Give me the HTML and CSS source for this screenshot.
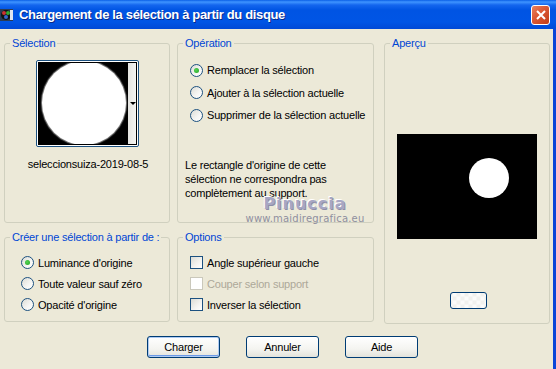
FILE: index.html
```html
<!DOCTYPE html>
<html>
<head>
<meta charset="utf-8">
<title>Chargement de la sélection à partir du disque</title>
<link rel="stylesheet" href="styles.css">
</head>
<body>
<div class="window">

<div class="titlebar">
  <svg class="appicon" width="14" height="14" viewBox="0 0 14 14">
    <rect x="0" y="1" width="13" height="12" fill="#2a3b55"/>
    <circle cx="6" cy="7" r="5" fill="#111"/>
    <circle cx="4" cy="5" r="2" fill="#c33"/>
    <circle cx="8" cy="5" r="2" fill="#3a3"/>
    <circle cx="6" cy="9" r="2" fill="#36c"/>
    <rect x="10" y="2" width="3" height="10" fill="#dfe6f0"/>
  </svg>
  <span class="title">Chargement de la sélection à partir du disque</span>
  <span class="close">
    <svg width="10" height="10" viewBox="0 0 10 10"><path d="M1 1 L9 9 M9 1 L1 9" stroke="#fff" stroke-width="2"/></svg>
  </span>
</div>

<div class="client">
  <div class="groups">

    <fieldset class="group g-selection">
      <legend>Sélection</legend>
      <div class="thumb">
        <div class="thumb-img">
          <div class="thumb-circle"></div>
          <div class="thumb-strip"><span class="arrow"></span></div>
        </div>
      </div>
      <div class="caption">seleccionsuiza-2019-08-5</div>
    </fieldset>

    <fieldset class="group g-operation">
      <legend>Opération</legend>
      <div class="choices">
        <label class="row"><span class="radio checked"></span>Remplacer la sélection</label>
        <label class="row"><span class="radio"></span>Ajouter à la sélection actuelle</label>
        <label class="row"><span class="radio"></span>Supprimer de la sélection actuelle</label>
      </div>
      <p class="warn">Le rectangle d'origine de cette sélection ne correspondra pas complètement au support.</p>
    </fieldset>

    <fieldset class="group g-apercu">
      <legend>Aperçu</legend>
      <div class="preview"><div class="preview-dot"></div></div>
      <span class="minibtn"></span>
    </fieldset>

    <fieldset class="group g-creer">
      <legend>Créer une sélection à partir de :</legend>
      <div class="choices">
        <label class="row"><span class="radio checked"></span>Luminance d'origine</label>
        <label class="row"><span class="radio"></span>Toute valeur sauf zéro</label>
        <label class="row"><span class="radio"></span>Opacité d'origine</label>
      </div>
    </fieldset>

    <fieldset class="group g-options">
      <legend>Options</legend>
      <div class="choices">
        <label class="row"><span class="check"></span>Angle supérieur gauche</label>
        <label class="row disabled"><span class="check"></span>Couper selon support</label>
        <label class="row"><span class="check"></span>Inverser la sélection</label>
      </div>
    </fieldset>

  </div>

  <div class="buttons">
    <button class="btn default">Charger</button>
    <button class="btn">Annuler</button>
    <button class="btn">Aide</button>
  </div>

  <div class="watermark">
    <div class="wm-name">Pinuccia</div>
    <div class="wm-url">www.maidiregrafica.eu</div>
  </div>
</div>

</div>
</body>
</html>
```

FILE: styles.css
```css
html, body {
  margin: 0;
  padding: 0;
}

body {
  width: 556px;
  height: 369px;
  overflow: hidden;
  background: #ece9d8;
  font-family: "Liberation Sans", Arial, sans-serif;
  font-size: 11px;
  letter-spacing: -0.2px;
  color: #000;
}

.window {
  width: 556px;
  height: 369px;
  position: relative;
}

/* title bar */
.titlebar {
  height: 29px;
  display: flex;
  align-items: center;
  background: linear-gradient(#0a5fe6 0, #3f94ff 2px, #1466ee 5px, #0054e3 10px, #0055e5 22px, #0049d6 29px);
  color: #fff;
}

.appicon {
  margin-right: 5px;
  flex: none;
}

.title {
  font-weight: bold;
  font-size: 13px;
  letter-spacing: -0.35px;
  text-shadow: 1px 1px 0 #0a2a8a;
  flex: 1;
}

.close {
  width: 17px;
  height: 18px;
  margin-right: 6px;
  margin-top: 1px;
  border: 1px solid #fff;
  border-radius: 3px;
  background: linear-gradient(135deg, #e8825f 0, #dc5b38 40%, #c23b16 100%);
  display: flex;
  align-items: center;
  justify-content: center;
  flex: none;
}

/* client area */
.client {
  height: 340px;
  border-right: 3px solid #0a45d8;
  position: relative;
}

.groups {
  display: grid;
  grid-template-columns: 166px 196px 168px;
  grid-template-rows: 187px 92px;
  column-gap: 8px;
  row-gap: 7px;
  padding: 7px 0 0 4px;
}

.group {
  margin: 0;
  padding: 0;
  min-width: 0;
  box-sizing: border-box;
  border: 1px solid #d0d0bf;
  border-radius: 3px;
}

.group legend {
  color: #0046d5;
  line-height: 14px;
  padding: 0 2px;
  margin-left: 5px;
  white-space: nowrap;
}

.g-selection { grid-column: 1; grid-row: 1; display: flex; flex-direction: column; align-items: center; padding-top: 10px; }
.g-operation { grid-column: 2; grid-row: 1; padding-top: 9px; margin-left: -1px; }
.g-apercu { grid-column: 3; grid-row: 1 / span 2; display: flex; flex-direction: column; align-items: center; margin-left: 2px; margin-bottom: -2px; }
.g-creer { grid-column: 1; grid-row: 2; padding-top: 8px; }
.g-options { grid-column: 2; grid-row: 2; padding-top: 8px; margin-left: -1px; }

.g-operation .choices,
.g-options .choices { padding-left: 12px; }
.g-creer .choices { padding-left: 16px; }

/* thumbnail */
.thumb {
  width: 99px;
  height: 83px;
  border: 1px solid #1c5180;
  border-radius: 2px;
  background: #fff;
  padding: 1px;
  box-sizing: content-box;
  margin-left: 1px;
}

.thumb-img {
  height: 81px;
  border: 1px dotted #000;
  background: #000;
  display: flex;
  overflow: hidden;
}

.thumb-circle {
  width: 84px;
  height: 84px;
  border-radius: 50%;
  background: #fff;
  margin: -2px 0 0 3px;
  flex: none;
  box-shadow: 0 0 1px 1px rgba(255,255,255,0.5);
}

.thumb-strip {
  flex: 1;
  margin-left: 2px;
  background: linear-gradient(90deg, #e4e4e0, #f4f4f2);
  position: relative;
}

.thumb-strip .arrow {
  position: absolute;
  right: 0;
  top: 39px;
  border-left: 3px solid transparent;
  border-right: 3px solid transparent;
  border-top: 3px solid #000;
}

.caption {
  margin-top: 10px;
  margin-left: 2px;
  line-height: 14px;
}

/* radios and checks */
.row {
  display: flex;
  align-items: center;
  height: 21px;
  gap: 4px;
}

.g-operation .row {
  height: 22.5px;
}

.radio {
  width: 11px;
  height: 11px;
  border: 1px solid #1c5180;
  border-radius: 50%;
  background: linear-gradient(135deg, #dcdcd5 0, #f6f6f4 60%, #ffffff 100%);
  position: relative;
  flex: none;
}

.radio.checked::after {
  content: "";
  position: absolute;
  left: 3px;
  top: 3px;
  width: 5px;
  height: 5px;
  border-radius: 50%;
  background: radial-gradient(circle at 40% 40%, #55d455, #21a121);
}

.check {
  width: 11px;
  height: 11px;
  border: 1px solid #1c5180;
  background: linear-gradient(135deg, #dcdcd5 0, #f4f4f1 60%, #ffffff 100%);
  flex: none;
}

.row.disabled {
  color: #aca899;
}

.row.disabled .check {
  border-color: #cac8bb;
  background: #fff;
}

.warn {
  margin: 31px 0 0 7px;
  line-height: 14px;
  width: 160px;
}

/* preview */
.preview {
  width: 140px;
  height: 105px;
  background: #000;
  margin-top: 84px;
  position: relative;
}

.preview-dot {
  position: absolute;
  left: 72px;
  top: 24px;
  width: 40px;
  height: 40px;
  border-radius: 50%;
  background: #fff;
}

.minibtn {
  display: block;
  width: 35px;
  height: 15px;
  margin-top: 53px;
  margin-left: 2px;
  border: 1px solid #003c74;
  border-radius: 3px;
  background:
    repeating-conic-gradient(#f1f1ee 0 25%, #fbfbfa 0 50%) 50% 50% / 8px 8px;
}

/* buttons */
.buttons {
  display: flex;
  gap: 26px;
  padding-left: 147px;
  margin-top: 14px;
}

.btn {
  width: 73px;
  height: 22px;
  padding: 0;
  font-family: "Liberation Sans", Arial, sans-serif;
  font-size: 11px;
  letter-spacing: -0.2px;
  color: #000;
  border: 1px solid #003c74;
  border-radius: 3px;
  background: linear-gradient(#ffffff 0, #f4f4f0 60%, #e3e3db 100%);
}

.btn.default {
  box-shadow: inset 0 0 0 1px #aecbf3, inset 0 -1px 0 1px #6b99e6;
}

/* watermark over the page */
.watermark {
  position: absolute;
  left: 242px;
  top: 166px;
  width: 126px;
  text-align: center;
  pointer-events: none;
  letter-spacing: 0;
}

.wm-name {
  font-family: "DejaVu Sans", sans-serif;
  font-size: 16px;
  font-weight: bold;
  letter-spacing: 1px;
  color: #a7a7c3;
  line-height: 18px;
  text-shadow: -1px -1px 0 #fff, 1px 1px 0 #8e8ea8;
}

.wm-url {
  font-family: "DejaVu Sans", sans-serif;
  font-size: 10px;
  color: #8f8f9f;
  line-height: 12px;
  letter-spacing: 0.2px;
}
```
